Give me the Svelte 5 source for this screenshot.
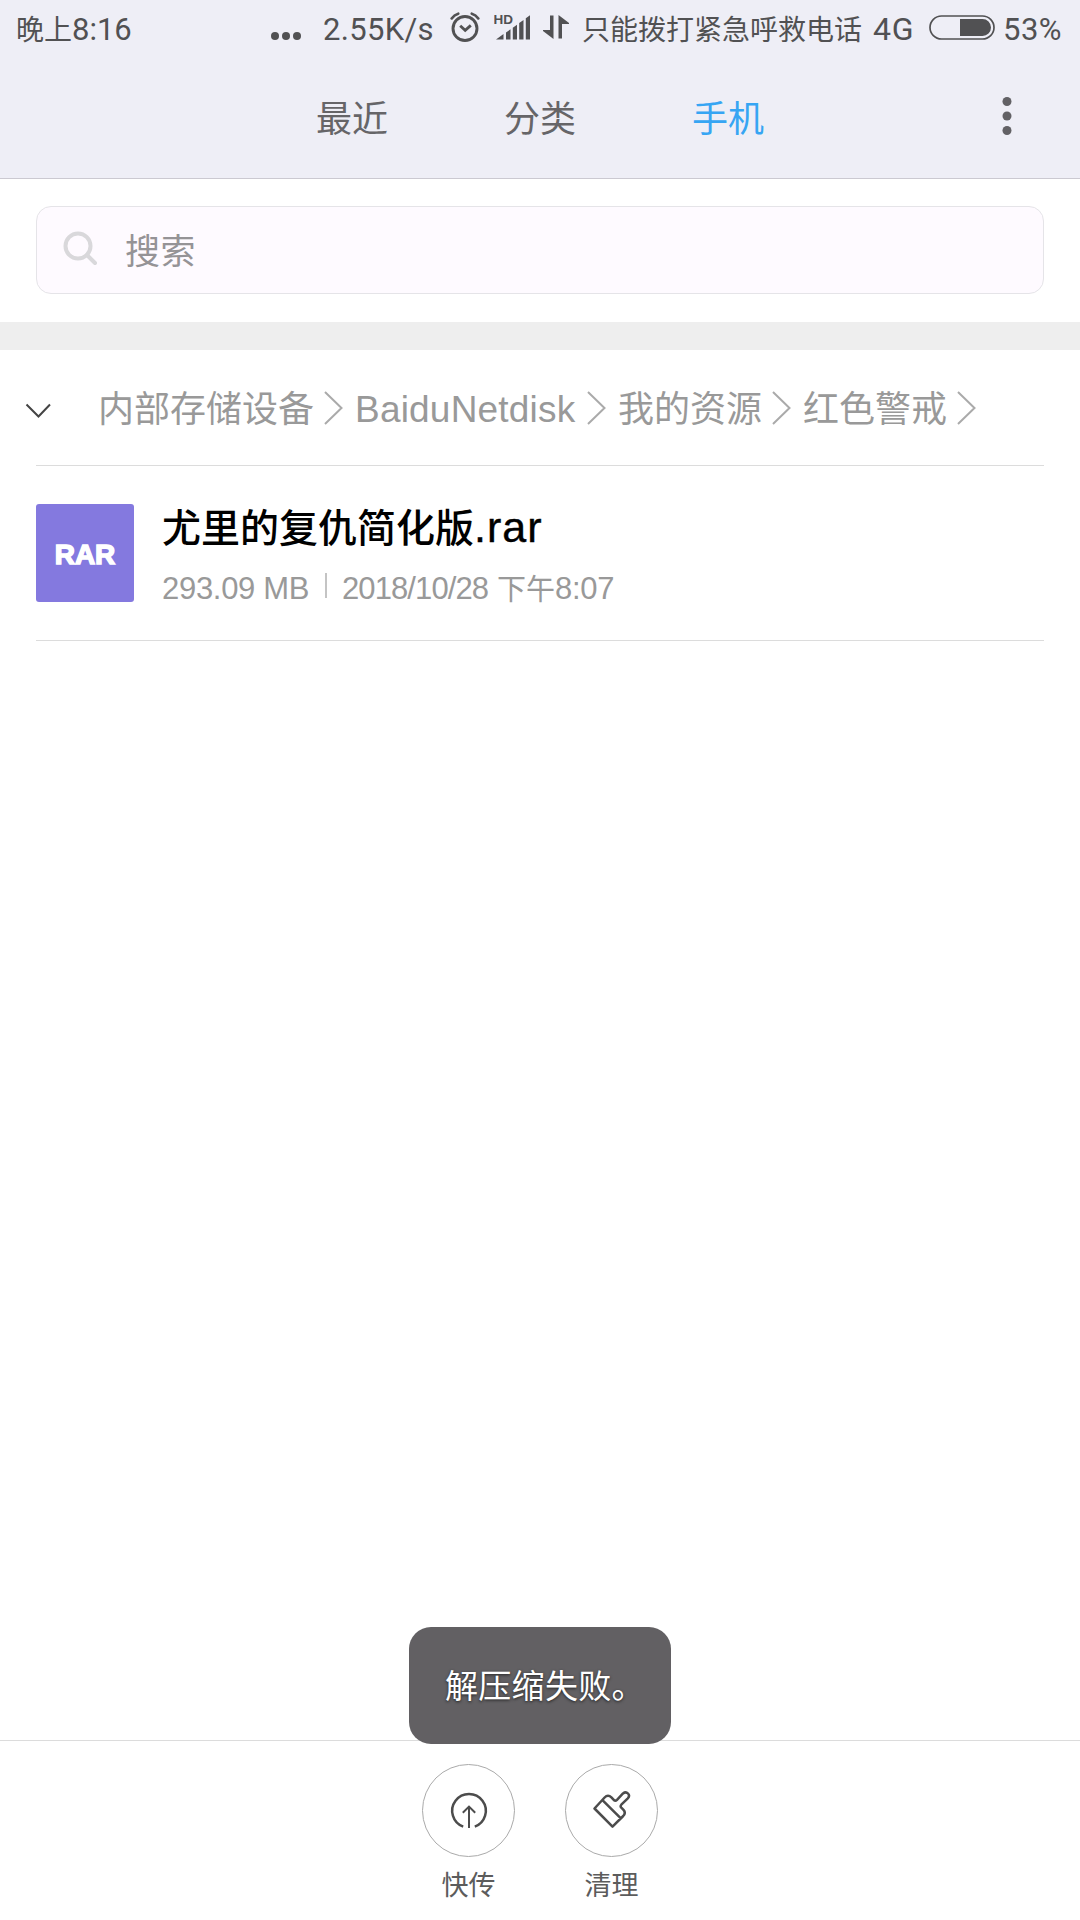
<script lang="ts">
    type Crumb = { name: string; width: number; latin?: boolean };

    let tabs = ["最近", "分类", "手机"];
    let active = 2;
    let crumbs: Crumb[] = [
        { name: "内部存储设备", width: 226 },
        { name: "BaiduNetdisk", width: 232, latin: true },
        { name: "我的资源", width: 154 },
        { name: "红色警戒", width: 154 },
    ];
    let files = [
        { name: "尤里的复仇简化版", ext: ".rar", size: "293.09 MB", date: "2018/10/28", part: "下午", time: "8:07" },
    ];
    let toast = "解压缩失败。";

    function selectTab(index: number) {
        active = index;
    }
</script>

<div class="screen">
    <header>
        <div class="status">
            <span class="time">晚上<span class="latin">8:16</span></span>
            <svg class="more" width="30" height="10" viewBox="0 0 30 10">
                <circle cx="4" cy="5" r="4" />
                <circle cx="15" cy="5" r="4" />
                <circle cx="26" cy="5" r="4" />
            </svg>
            <span class="latin speed">2.55K/s</span>
            <svg class="alarm" width="30" height="30" viewBox="0 0 30 30">
                <g fill="none" stroke="#515153" stroke-linecap="round">
                    <circle cx="15" cy="16.5" r="12" stroke-width="2.9" />
                    <path d="M10.2 13.8l5 4.6 5.6-5" stroke-width="2.8" stroke-linecap="butt" />
                    <path d="M1.7 6.4Q4.2 2.8 8.2 1.7M21.8 1.7Q25.8 2.8 28.3 6.4" stroke-width="2.7" />
                </g>
            </svg>
            <svg class="signal" width="37" height="32" viewBox="0 -4 37 32">
                <text x="-.4" y="10.8">HD</text>
                <path d="M2 26.5L9.5 21v5.5zM12 19.5l4.5-3.2v10.2H12zM18.8 14.7L23 11.7v14.8h-4.2zM25.2 10L29.5 7v19.5h-4.3zM31.8 5.3L36 2.3v24.2h-4.2z" />
            </svg>
            <svg class="arrows" width="26" height="24" viewBox="0 0 26 24">
                <path d="M7 .5h3.5V24L0 16V15h7zM15.5 23.5V0L26 8v1h-7v14.5z" />
            </svg>
            <span class="carrier">只能拨打紧急呼救电话</span>
            <span class="latin net">4G</span>
            <svg class="battery" width="66" height="25" viewBox="0 0 66 25">
                <rect x="1" y="1" width="64" height="23" rx="11.5" fill="none" stroke="#515153" stroke-width="1.7" />
                <path d="M31 4h22.5a8.5 8.5 0 0 1 0 17H31z" />
            </svg>
            <span class="latin percent">53%</span>
        </div>
        <nav>
            {#each tabs as tab, i}
                <button class:active={i == active} onclick={() => selectTab(i)}>{tab}</button>
            {/each}
            <svg class="menu" width="10" height="40" viewBox="0 0 10 40">
                <circle cx="5" cy="5.5" r="4.5" />
                <circle cx="5" cy="20" r="4.5" />
                <circle cx="5" cy="34.5" r="4.5" />
            </svg>
        </nav>
    </header>

    <div class="searchbar">
        <div class="search">
            <svg width="36" height="36" viewBox="0 0 36 36">
                <circle cx="15" cy="15" r="12.5" />
                <path d="M24 24l8 8" />
            </svg>
            <span>搜索</span>
        </div>
    </div>

    <div class="path">
        <svg class="down" width="26" height="16" viewBox="0 0 26 16">
            <path d="M1.5 1.5L13.5 13.5 25 1.5" />
        </svg>
        {#each crumbs as crumb}
            <span class="crumb" class:latin={crumb.latin} style="width:{crumb.width}px">{crumb.name}</span>
            <svg class="next" width="19" height="34" viewBox="0 0 19 34">
                <path d="M1 1l16.5 16L1 33" />
            </svg>
        {/each}
    </div>

    <main>
        {#each files as file}
            <div class="file">
                <div class="icon">RAR</div>
                <div class="info">
                    <div class="name">{file.name}<span class="latin">{file.ext}</span></div>
                    <div class="meta">
                        <span class="latin size">{file.size}</span>
                        <span class="sep"></span>
                        <span class="latin date">{file.date}</span>
                        <span class="part">{file.part}</span>
                        <span class="latin">{file.time}</span>
                    </div>
                </div>
            </div>
        {/each}
    </main>

    <footer>
        <div class="action">
            <div class="round">
                <svg width="40" height="40" viewBox="0 0 40 40">
                    <path d="M14.2 35.6A16.8 16.8 0 1 1 25.8 35.6" stroke-width="2.5" />
                    <path d="M20 37V16.5M13.8 21.8L20 15.6l6.2 6.2" stroke-width="2" />
                </svg>
            </div>
            <span>快传</span>
        </div>
        <div class="action">
            <div class="round">
                <svg width="40" height="40" viewBox="0 0 40 40">
                    <path d="M2.5 17.5L12.6 6.5Q16 3 19.4 6.4L22 9.2Q23.500 10.3 25 8.8L31 2.4Q33.8 .2 36 2.5T35.8 7.4L29.3 13.7Q28 15.2 29.3 16.6L31.5 18.8Q34.2 21.8 31.2 25L20.5 35.7ZM10.7 9.3L28.6 27.2" stroke-width="2.5" stroke-linejoin="round" />
                </svg>
            </div>
            <span>清理</span>
        </div>
    </footer>

    <div class="toast">{toast}</div>
</div>

<style>
    :global(body) {
        margin: 0;
        background: #fff;
    }
    * {
        box-sizing: border-box;
    }
    .screen {
        position: relative;
        display: flex;
        flex-direction: column;
        width: 1080px;
        height: 1920px;
        background: #fff;
        font-family: "Noto Sans CJK SC", sans-serif;
        overflow: hidden;
        white-space: nowrap;
    }
    svg {
        flex: none;
        display: block;
    }
    .latin {
        font-family: "Liberation Sans", sans-serif;
    }
    header {
        height: 179px;
        background: #eeeef6;
        border-bottom: 1px solid #cbc9d1;
    }
    .status {
        display: flex;
        align-items: center;
        height: 54px;
        padding-left: 16px;
        font-size: 28px;
        line-height: 56px;
        color: #515153;
        fill: #515153;
    }
    .status > span {
        flex: none;
        height: 54px;
    }
    .status .latin {
        font-family: Roboto, sans-serif;
        font-size: 31px;
    }
    .status > .latin {
        line-height: 59px;
    }
    .time {
        width: 255px;
    }
    .more {
        margin-top: 17px;
    }
    .speed {
        width: 126px;
        padding-left: 22px;
        margin-right: 23px;
        letter-spacing: .3px;
    }
    .alarm {
        margin-right: 14px;
    }
    .signal {
        margin-top: -4px;
        margin-right: 12px;
    }
    .signal text {
        font: 700 13.5px "Liberation Sans", sans-serif;
    }
    .carrier {
        width: 304px;
        padding-left: 13px;
    }
    .status .net {
        width: 56px;
        font-size: 32px;
        letter-spacing: .8px;
    }
    .percent {
        padding-left: 8px;
        letter-spacing: .5px;
    }
    nav {
        display: flex;
        align-items: center;
        height: 124px;
        padding-left: 258px;
    }
    nav button {
        width: 188px;
        height: 124px;
        padding: 0;
        border: 0;
        background: none;
        font: 36px/124px "Noto Sans CJK SC", sans-serif;
        color: #666568;
    }
    nav button.active {
        color: #36a5f3;
    }
    .menu {
        margin-left: 180px;
        fill: #626165;
    }
    .searchbar {
        height: 171px;
        padding: 27px 36px 0;
        border-bottom: 28px solid #eee;
    }
    .search {
        display: flex;
        align-items: center;
        height: 88px;
        padding-left: 26px;
        border: 1px solid #e5e4e8;
        border-radius: 15px;
        background: #fefaff;
        font-size: 35px;
        line-height: 84px;
        letter-spacing: .5px;
        color: #959396;
    }
    .search svg {
        margin-top: -2px;
        margin-right: 26px;
        fill: none;
        stroke: #d9d8db;
        stroke-width: 4;
        stroke-linecap: round;
    }
    .search span {
        height: 86px;
    }
    .path {
        display: flex;
        align-items: center;
        height: 115px;
        margin-right: 36px;
        padding-left: 25px;
        font-size: 36px;
        color: #999;
    }
    .path svg {
        fill: none;
    }
    .down {
        margin: 7px 47px 0 0;
        stroke: #444;
        stroke-width: 2;
    }
    .next {
        margin-right: 12px;
        stroke: #aaa;
        stroke-width: 2;
    }
    .crumb {
        flex: none;
        height: 115px;
        line-height: 112px;
    }
    .crumb.latin {
        font-size: 37px;
        line-height: 119px;
        letter-spacing: .2px;
    }
    main {
        flex: 1;
        padding: 0 36px;
    }
    .file {
        display: flex;
        align-items: center;
        height: 176px;
        border-top: 1px solid #dcdcdc;
        border-bottom: 1px solid #dcdcdc;
    }
    .icon {
        width: 98px;
        height: 98px;
        margin-right: 28px;
        border-radius: 3px;
        background: #8479df;
        font: 700 28px/101px "Liberation Sans", sans-serif;
        text-align: center;
        color: #fff;
        -webkit-text-stroke: 1.5px #fff;
    }
    .name {
        height: 64px;
        font-size: 39px;
        font-weight: 500;
        line-height: 62px;
        color: #000;
    }
    .name .latin {
        font-size: 43px;
        letter-spacing: 1px;
        -webkit-text-stroke: .4px #000;
    }
    .meta {
        display: flex;
        align-items: center;
        height: 54px;
        font-size: 31px;
        line-height: 54px;
        color: #999;
    }
    .meta .latin {
        height: 54px;
        line-height: 62px;
        letter-spacing: -.3px;
    }
    .size {
        width: 163px;
    }
    .sep {
        width: 2px;
        height: 25px;
        margin-right: 15px;
        background: #c4c4c4;
    }
    .meta .date {
        width: 155px;
        letter-spacing: -.9px;
    }
    .part {
        height: 54px;
        font-size: 29px;
        line-height: 58px;
    }
    footer {
        display: flex;
        justify-content: center;
        gap: 50px;
        height: 180px;
        padding-top: 23px;
        border-top: 1px solid #dcdcdc;
    }
    .action {
        width: 93px;
        text-align: center;
        font-size: 27px;
        line-height: 54px;
        color: #5c5c5c;
    }
    .round {
        display: flex;
        align-items: center;
        justify-content: center;
        height: 93px;
        border: 1px solid #aaa;
        border-radius: 50%;
    }
    .round svg {
        fill: none;
        stroke: #4c4c4c;
    }
    .toast {
        position: absolute;
        left: 409px;
        top: 1627px;
        width: 262px;
        height: 117px;
        padding-left: 36px;
        border-radius: 22px;
        background: #626063;
        font-size: 33px;
        line-height: 115px;
        letter-spacing: .3px;
        color: #fff;
        text-shadow: 0 1px 3px #222;
    }
</style>
